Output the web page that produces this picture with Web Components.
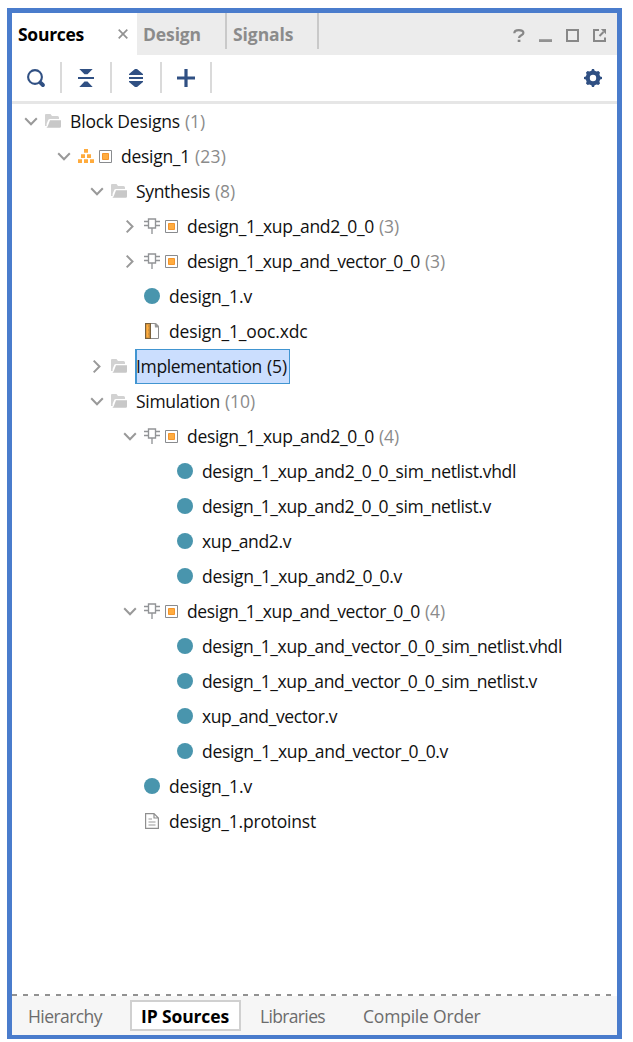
<!DOCTYPE html>
<html lang="en">
<head>
<meta charset="utf-8">
<title>Sources</title>
<style>
html,body{margin:0;background:#fff}
body{width:633px;height:1042px;overflow:hidden;font:17.5px/24px "Open Sans","Noto Sans",sans-serif;color:#111}
</style>
</head>
<body>
<sources-panel></sources-panel>
<script>
const icons = {
  down: [13,9,'<path d="M.2 1.2 6 7.2 11.8 1.2" fill="none" stroke="#999" stroke-width="2"/>'],
  right: [9,13,'<path d="M.7.6 6.5 6.5.7 12.4" fill="none" stroke="#999" stroke-width="2"/>'],
  folder: [16,14,'<path d="M0 12V1Q0 0 1 0H5.5L7 2H12.5Q14 2 14 3.5V5H5Q3.6 5 3.2 6L1.6 10V12Z" fill="#d2d2d2"/><path d="M5 6.3H16V12.5Q16 13.8 14.7 13.8H1.4Q2.6 13 3 11.6Z" fill="#c8c8c8"/>'],
  tree: [16,14,'<path d="M6 0h4v3.7H6zM3 5.2h4V9H3zM9 5.2h4V9H9zM0 10.3h4V14H0zM6 10.3h4V14H6zM12 10.3h4V14h-4z" fill="#ffab3d"/>'],
  block: [13,13,'<path d="M.5.5h12v12H.5z" fill="#fff" stroke="#898b8e"/><path d="M3.5 3.5h6v6h-6z" fill="#ffac40" stroke="#f4952c"/>'],
  chip: [16,16,'<path d="M4.5 1h7v9h-7zM0 3.5h4M0 7.5h4M12 3.5h4M12 7.5h4M8 10.5V16" fill="none" stroke="#929497" stroke-width="1.35"/>'],
  dot: [16,16,'<circle cx="8" cy="8" r="8" fill="#4995ad"/>'],
  xdc: [14,16,'<path d="M6 .5h4.5l3 3v12H6" fill="#fff" stroke="#8c8c8c"/><path d="M9.5 0H11l3 3v1.5H10z" fill="#999"/><path d="M.6.6h4.8v14.8H.6z" fill="#ffad3f" stroke="#79603b" stroke-width="1.2"/><path d="M3 3h2M3.5 5h2M3 7h2M3.5 9h2M3 11h2M3.5 13h2" stroke="#96723b" stroke-width=".8"/>'],
  doc: [14,16,'<path d="M.6.6H9L13.4 5v10.4H.6zM9 .6V5h4.4" fill="none" stroke="#8f8f8f" stroke-width="1.2"/><path d="M3.5 6H7M3.5 9h7M3.5 12h7" stroke="#999" stroke-width="1"/>'],
  search: [18,18,'<circle cx="8" cy="8" r="6.9" fill="none" stroke="#305083" stroke-width="2.1"/><path d="m13.4 13.6 2.5 2.4" stroke="#305083" stroke-width="4" stroke-linecap="round"/>'],
  collapse: [16,18,'<path d="M1.3 0h13.4L9.5 5.2H6.5zM0 8h16v2H0zM6.5 12.6h3L14.7 18H1.3z" fill="#305083"/>'],
  expand: [16,18,'<path d="M7 0h2L15 5v1H1V5zM1 8h14v2H1zM1 12h14v1L9 18H7L1 13z" fill="#305083"/>'],
  plus: [18,18,'<path d="M7.4 0h3.2v7.4H18v3.2h-7.4V18H7.4v-7.4H0V7.4h7.4z" fill="#305083"/>'],
  gear: [18,18,'<path fill="#305083" fill-rule="evenodd" d="M7.4 1.8 8 0h2l.6 1.8 2 .8L14.4 2 16 3.6l-.6 1.8.8 2L18 8v2l-1.8.6-.8 2 .6 1.8-1.6 1.6-1.8-.6-2 .8L10 18H8l-.6-1.8-2-.8-1.8.6L2 14.4l.6-1.8-.8-2L0 10V8l1.8-.6.8-2L2 3.6 3.6 2l1.8.6zM9 5.8a3.2 3.2 0 1 0 0 6.4 3.2 3.2 0 0 0 0-6.4z"/>'],
  close: [10,10,'<path d="m.7.7 8.6 8.6m0-8.6L.7 9.3" stroke="#929292" stroke-width="1.7"/>'],
  help: [12,13,'<path d="M1.3 4.3C1.3 2 3 1.1 5.8 1.1S10.4 2 10.4 4C10.4 6.5 6 6.1 6 9" fill="none" stroke="#888" stroke-width="2.2"/><path d="M4.7 10.7h2.7V13H4.7z" fill="#888"/>'],
  minimize: [13,13,'<path d="M0 10.2h13V13H0z" fill="#929292"/>'],
  maximize: [13,13,'<path d="M1 1h11v11H1z" fill="none" stroke="#888" stroke-width="2"/>'],
  popout: [14,13,'<path d="M6 1H1v11h11V8.5" fill="none" stroke="#888" stroke-width="2"/><path d="m6.5 7 4-4" stroke="#888" stroke-width="2"/><path d="M7.8 0H13v5.2z" fill="#888"/>']
};

class UiIcon extends HTMLElement {
  connectedCallback() {
    const [w,h,art] = icons[this.getAttribute('name')];
    this.attachShadow({mode:'open'}).innerHTML = `<style>:host{display:block;flex:none;width:${w}px;height:${h}px}svg{display:block;overflow:visible}</style><svg width="${w}" height="${h}" viewBox="0 0 ${w} ${h}">${art}</svg>`;
  }
}
customElements.define('ui-icon', UiIcon);

// A label that spreads its letters evenly over a given width.
class FitText extends HTMLElement {
  connectedCallback() {
    const w = +this.getAttribute('w');
    this.attachShadow({mode:'open'}).innerHTML = `<style>:host{display:block;flex:none;width:${w}px;white-space:nowrap}span{display:inline-block}</style><span><slot></slot></span>`;
    const s = this.shadowRoot.querySelector('span');
    s.style.letterSpacing = (w - s.getBoundingClientRect().width) / this.textContent.length + 'px';
  }
}
customElements.define('fit-text', FitText);

class TreeRow extends HTMLElement {
  connectedCallback() {
    const a = n => this.getAttribute(n);
    const list = a('icons').split(' ');
    const arrow = a('arrow');
    this.attachShadow({mode:'open'}).innerHTML = `<style>
      :host{display:flex;height:35px;box-sizing:border-box;padding-left:${12 + 33 * a('depth')}px}
      .arrow{width:21px;flex:none;display:flex;align-items:center}
      .arrow ui-icon{margin-left:${arrow === 'right' ? 3 : 1}px}
      .icons{display:flex;gap:5px;align-items:center;width:${list.length > 1 ? 34 : 16}px;justify-content:${list.length > 1 ? 'flex-start' : 'center'};padding-bottom:1px}
      .label{display:flex;gap:5px;height:35px;box-sizing:border-box;margin-left:9px;padding:5px 0 0 0}
      .count{color:#8b8b8b}
      :host([selected]) .label{background:#cbdefe;border:1px solid #4195d1;border-left-width:2px;padding:4px 2px 0 0;margin-left:8px}
      :host([selected]) .label fit-text:first-child{margin-left:-1px}
      :host([selected]) .count{color:#111}
    </style><span class="arrow">${arrow ? `<ui-icon name="${arrow}"></ui-icon>` : ''}</span>
    <span class="icons">${list.map(n => `<ui-icon name="${n}"></ui-icon>`).join('')}</span>
    <span class="label"><fit-text w="${a('w')}">${a('label')}</fit-text>${a('count') ? `<fit-text class="count" w="${a('cw')}">(${a('count')})</fit-text>` : ''}</span>`;
  }
}
customElements.define('tree-row', TreeRow);

class SourceTree extends HTMLElement {
  connectedCallback() {
    const rows = [
      [0,'down','folder','Block Designs',110,1,20],
      [1,'down','tree block','design_1',69,23,31],
      [2,'down','folder','Synthesis',74,8,20],
      [3,'right','chip block','design_1_xup_and2_0_0',187,3,20],
      [3,'right','chip block','design_1_xup_and_vector_0_0',233,3,20],
      [3,'','dot','design_1.v',83],
      [3,'','xdc','design_1_ooc.xdc',138.5],
      [2,'right','folder','Implementation',126,5,20],
      [2,'down','folder','Simulation',84,10,30],
      [3,'down','chip block','design_1_xup_and2_0_0',187,4,20],
      [4,'','dot','design_1_xup_and2_0_0_sim_netlist.vhdl',314],
      [4,'','dot','design_1_xup_and2_0_0_sim_netlist.v',289],
      [4,'','dot','xup_and2.v',89],
      [4,'','dot','design_1_xup_and2_0_0.v',200],
      [3,'down','chip block','design_1_xup_and_vector_0_0',233,4,20],
      [4,'','dot','design_1_xup_and_vector_0_0_sim_netlist.vhdl',360],
      [4,'','dot','design_1_xup_and_vector_0_0_sim_netlist.v',335],
      [4,'','dot','xup_and_vector.v',135],
      [4,'','dot','design_1_xup_and_vector_0_0.v',246],
      [3,'','dot','design_1.v',83],
      [3,'','doc','design_1.protoinst',147]
    ];
    this.attachShadow({mode:'open'}).innerHTML = `<style>:host{display:block;flex:1;min-height:0}</style>` +
      rows.map(([d,ar,ic,l,w,c,cw]) => `<tree-row depth="${d}" arrow="${ar}" icons="${ic}" label="${l}" w="${w}" ${c ? `count="${c}" cw="${cw}"` : ''} ${l === 'Implementation' ? 'selected' : ''}></tree-row>`).join('');
  }
}
customElements.define('source-tree', SourceTree);

class PanelTabs extends HTMLElement {
  connectedCallback() {
    this.attachShadow({mode:'open'}).innerHTML = `<style>
      :host{display:flex;height:42px;flex:none;background:#ececec;font-weight:700;color:#8b8b8b}
      .tab{display:flex;box-sizing:border-box;height:36px;padding:9px 0 0 6px;border-right:2px solid #c9c9c9}
      .active{height:42px;background:#fff;color:#000;border:0;width:125px}
      .active ui-icon{margin:7px 0 0 34px}
      .design{width:90px}.signals{width:92px}
      .tools{display:flex;gap:14px;margin:16px 10px 0 auto}
    </style>
    <div class="tab active"><fit-text w="66">Sources</fit-text><ui-icon name="close"></ui-icon></div>
    <div class="tab design"><fit-text w="58">Design</fit-text></div>
    <div class="tab signals"><fit-text w="60.5">Signals</fit-text></div>
    <div class="tools"><ui-icon name="help"></ui-icon><ui-icon name="minimize"></ui-icon><ui-icon name="maximize"></ui-icon><ui-icon name="popout"></ui-icon></div>`;
  }
}
customElements.define('panel-tabs', PanelTabs);

class PanelToolbar extends HTMLElement {
  connectedCallback() {
    this.attachShadow({mode:'open'}).innerHTML = `<style>
      :host{display:flex;height:49px;flex:none;box-sizing:border-box;border-bottom:3px solid #e6e6e6;padding-top:7px}
      div{width:50px;height:31px;box-sizing:border-box;border-right:2px solid #dadada;display:flex;align-items:center;justify-content:center}
      div ui-icon{margin-bottom:-1px}
      .gear{margin:7px 15px 0 auto}
    </style><div><ui-icon name="search"></ui-icon></div><div><ui-icon name="collapse"></ui-icon></div><div><ui-icon name="expand"></ui-icon></div><div><ui-icon name="plus"></ui-icon></div><ui-icon class="gear" name="gear"></ui-icon>`;
  }
}
customElements.define('panel-toolbar', PanelToolbar);

class ViewTabs extends HTMLElement {
  connectedCallback() {
    this.attachShadow({mode:'open'}).innerHTML = `<style>
      :host{display:block;flex:none;height:41px;background:#f6f6f6;color:#6c6c6c}
      .rule{height:2px;background:repeating-linear-gradient(90deg,#929292 0 5px,#fff 5px 11px)}
      .row{display:flex;height:39px;padding-left:16px;align-items:flex-start}
      .row>fit-text{margin-top:8px}
      .active{box-sizing:border-box;width:111px;height:31px;border:2px solid #d0d0d0;background:#fff;color:#000;font-weight:700;margin:4px 19px 0 28px;padding:2px 0 0 9px}
      .last{margin-left:38px}
    </style><div class="rule"></div><div class="row"><fit-text w="74">Hierarchy</fit-text><div class="active"><fit-text w="88">IP Sources</fit-text></div><fit-text w="65">Libraries</fit-text><fit-text class="last" w="117.5">Compile Order</fit-text></div>`;
  }
}
customElements.define('view-tabs', ViewTabs);

class SourcesPanel extends HTMLElement {
  connectedCallback() {
    this.attachShadow({mode:'open'}).innerHTML = `<style>
      :host{display:flex;flex-direction:column;box-sizing:border-box;width:615px;height:1031px;margin:8px 0 0 7px;border:5px solid #4a7ccc;border-bottom-width:4px;background:#fff}
    </style><panel-tabs></panel-tabs><panel-toolbar></panel-toolbar><source-tree></source-tree><view-tabs></view-tabs>`;
  }
}
customElements.define('sources-panel', SourcesPanel);
</script>
</body>
</html>
